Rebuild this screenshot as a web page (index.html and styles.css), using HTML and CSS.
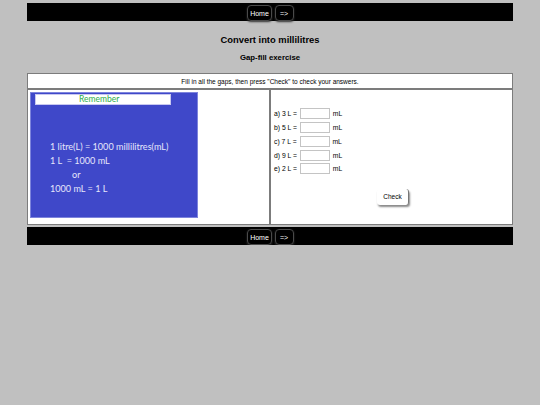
FILE: index.html
```html
<!DOCTYPE html>
<html>
<head>
<meta charset="utf-8">
<title>Convert into millilitres</title>
<link rel="stylesheet" href="styles.css">
</head>
<body>
<div class="page">
  <nav class="bar">
    <a class="navbtn home">Home</a>
    <a class="navbtn next">=&gt;</a>
  </nav>
  <h1 class="title">Convert into millilitres</h1>
  <h2 class="subtitle">Gap-fill exercise</h2>
  <table class="ex">
    <tr>
      <td class="instr" colspan="2">Fill in all the gaps, then press "Check" to check your answers.</td>
    </tr>
    <tr>
      <td class="left">
        <div class="card">
          <div class="banner">Remember</div>
          <div class="facts">
            <div>1 litre(L) = 1000 millilitres(mL)</div>
            <div>1 L &nbsp;= 1000 mL</div>
            <div class="or">or</div>
            <div>1000 mL = 1 L</div>
          </div>
        </div>
      </td>
      <td class="right">
        <div class="rightin">
          <div class="rows">
            <div class="row">a) 3 L = <input class="gap" type="text"> mL</div>
            <div class="row">b) 5 L = <input class="gap" type="text"> mL</div>
            <div class="row">c) 7 L = <input class="gap" type="text"> mL</div>
            <div class="row">d) 9 L = <input class="gap" type="text"> mL</div>
            <div class="row">e) 2 L = <input class="gap" type="text"> mL</div>
          </div>
          <div class="checkwrap"><button class="check">Check</button></div>
        </div>
      </td>
    </tr>
  </table>
  <nav class="bar bottom">
    <a class="navbtn home">Home</a>
    <a class="navbtn next">=&gt;</a>
  </nav>
</div>
</body>
</html>
```
FILE: styles.css
```css
html, body {
  margin: 0;
  padding: 0;
  background: #c0c0c0;
  font-family: "Liberation Sans", Arial, sans-serif;
  color: #000;
}

.page {
  width: 90%;
  margin: 0 auto;
  padding-top: 3px;
}

.bar {
  height: 18px;
  background: #000;
  display: flex;
  justify-content: center;
  align-items: flex-start;
  gap: 3px;
  padding-left: 1px;
}

.bar.bottom {
  margin-top: 2px;
}

.navbtn {
  display: flex;
  align-items: center;
  justify-content: center;
  box-sizing: border-box;
  height: 16px;
  margin-top: 2px;
  border: 1px solid #4a4a4a;
  border-radius: 4px;
  color: #fff;
  font-size: 7px;
  box-shadow: 0 1px 2px #333;
}

.navbtn.home { width: 25px; }
.navbtn.next { width: 19px; justify-content: flex-start; padding-left: 4px; }

.title {
  margin: 13px 0 0;
  font-size: 9.4px;
  line-height: 12px;
  text-align: center;
  font-weight: bold;
}

.subtitle {
  margin: 7px 0 0;
  font-size: 7.8px;
  line-height: 10px;
  text-align: center;
  font-weight: bold;
}

.ex {
  width: 100%;
  margin-top: 10px;
  border-collapse: separate;
  border-spacing: 0;
  background: #fff;
}

.ex td {
  border: 1px solid #7c7c7c;
  padding: 0;
}

.instr {
  height: 14px;
  text-align: center;
  font-size: 6.5px;
  vertical-align: middle;
}

.left, .right {
  width: 50%;
  height: 134px;
  vertical-align: top;
}

.left {
  padding: 2px 0 0 2px !important;
  box-sizing: border-box;
  height: 136px;
}

.card {
  width: 168px;
  height: 126px;
  box-sizing: border-box;
  background: #3f48c9;
  border: 1px solid #7d84dc;
  padding: 1px 0 0 4px;
}

.banner {
  width: 136px;
  height: 11px;
  box-sizing: border-box;
  background: #fff;
  border: 1px solid #c8c8f0;
  color: #2fae4a;
  font-family: Lato, "DejaVu Sans", sans-serif;
  font-size: 8.5px;
  line-height: 9px;
  padding-left: 43px;
}

.facts {
  margin-top: 35px;
  padding-left: 15px;
  color: #e6e6fb;
  font-family: Lato, "DejaVu Sans", sans-serif;
  font-size: 9.1px;
  line-height: 14px;
}

.facts .or {
  padding-left: 22px;
}

.rightin {
  padding: 17px 0 0 3px;
}

.rows {
  font-size: 6.8px;
}

.row {
  height: 13.75px;
  display: flex;
  align-items: center;
  white-space: pre;
}

.gap {
  width: 30px;
  height: 11px;
  box-sizing: border-box;
  margin: 0 1px 0 1px;
  padding: 0;
  border: 1px solid #c4c4c4;
  background: #fff;
}

.checkwrap {
  display: flex;
  justify-content: center;
  margin-top: 13px;
}

.check {
  width: 32px;
  height: 16px;
  padding: 0;
  background: #fff;
  border: none;
  border-radius: 3px;
  font-family: "Liberation Sans", Arial, sans-serif;
  font-size: 6.5px;
  color: #000;
  box-shadow: 1px 2px 2px #8a8a8a;
  border-right: 1px solid #777;
}
```
